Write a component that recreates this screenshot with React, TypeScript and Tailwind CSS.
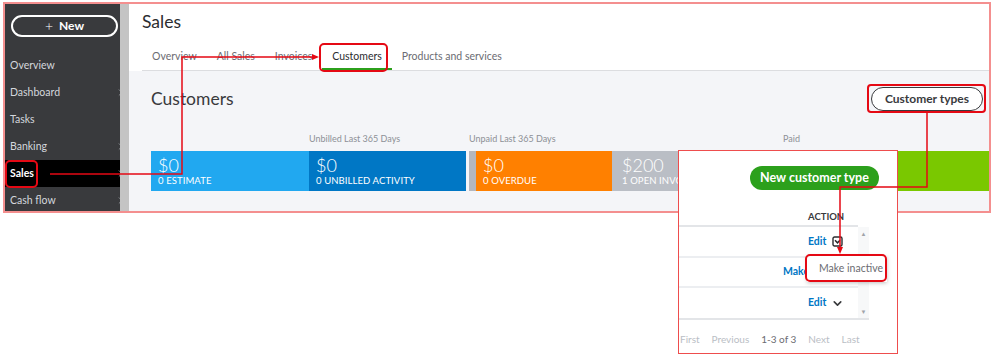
import React from "react";
import { ChevronRight, ChevronDown } from "lucide-react";

const nav = [
  { label: "Overview", chevron: false },
  { label: "Dashboard", chevron: true },
  { label: "Tasks", chevron: false },
  { label: "Banking", chevron: true },
  { label: "Sales", chevron: true, active: true },
  { label: "Cash flow", chevron: true },
];

const tabs = ["Overview", "All Sales", "Invoices", "Customers", "Products and services"];

function Segment({ amount, label, className }: { amount: string; label: string; className: string }) {
  return (
    <div className={`h-full flex flex-col justify-center overflow-hidden whitespace-nowrap text-white ${className}`}>
      <span className="text-[18px] leading-[20px] font-light">{amount}</span>
      <span className="text-[9.5px] leading-[12px] tracking-[0.01em]">{label}</span>
    </div>
  );
}

function FocusChevron() {
  return (
    <svg width="11" height="11" viewBox="0 0 11 11" className="text-[#2b2c2f]">
      <rect x="1" y="1" width="9" height="9" rx="1.5" fill="none" stroke="currentColor" strokeWidth="1.4" />
      <path d="M3 4.3 L5.5 6.8 L8 4.3" fill="none" stroke="currentColor" strokeWidth="1.6" />
    </svg>
  );
}

export default function App() {
  return (
    <div className="relative w-[999px] h-[359px] bg-white overflow-hidden font-['Lato','Noto_Sans',sans-serif] text-[#393a3d]">
      {/* first screenshot */}
      <div className="pl-[3px] pt-[2px]">
        <div className="w-[988px] h-[211px] border-2 border-[#f48f8f] flex overflow-hidden">
          {/* sidebar */}
          <div className="w-[115px] h-full bg-[#393a3d] overflow-hidden flex flex-col">
            <div className="ml-[6px] mt-[11px] w-[107px] h-[24px] rounded-full border-2 border-white flex items-center justify-center gap-[6px] text-white">
              <span className="text-[14px] leading-none font-light">+</span>
              <span className="text-[12px] font-bold">New</span>
            </div>
            <div className="mt-[15px] flex flex-col">
              {nav.map((n) => (
                <div
                  key={n.label}
                  className={`h-[27px] pl-[5px] flex items-center justify-between text-[10.5px] ${
                    n.active ? "bg-black text-white font-bold" : "text-[#d4d7dc]"
                  }`}
                >
                  <span>{n.label}</span>
                  {n.chevron && <ChevronRight size={11} strokeWidth={2} className="-mr-[6px] text-[#8d9096]" />}
                </div>
              ))}
            </div>
          </div>
          <div className="w-[9px] h-full bg-[#c4c4c4]" />
          {/* main */}
          <div className="flex-1 h-full flex flex-col bg-[#f4f5f8]">
            <div className="h-[67px] bg-white pl-[13px] pt-[8px]">
              <div className="text-[17.5px] leading-[20px] text-[#2b2c2f]">Sales</div>
              <div className="mt-[11px] h-[28px] flex border-b border-[#dcdde0] text-[10.5px] text-[#6b6c72]">
                {tabs.map((t) => (
                  <div
                    key={t}
                    className={`px-[10px] flex items-center ${
                      t === "Customers" ? "text-[#2b2c2f] border-b-2 border-[#2ca01c] pt-[2px]" : ""
                    }`}
                  >
                    {t}
                  </div>
                ))}
              </div>
            </div>
            <div className="pl-[22px] pt-[16px]">
              <div className="flex items-center justify-between pr-[6px]">
                <span className="text-[17.5px] leading-[22px] text-[#393a3d]">Customers</span>
                <div className="w-[112px] h-[24px] rounded-full border-[1.5px] border-[#393a3d] bg-white flex items-center justify-center text-[12px] font-bold text-[#393a3d]">
                  Customer types
                </div>
              </div>
              <div className="mt-[22px] h-[12px] flex text-[9px] leading-[12px] text-[#8d9096] whitespace-nowrap">
                <div className="w-[158px]" />
                <div className="w-[160px]">Unbilled Last 365 Days</div>
                <div className="w-[314px]">Unpaid Last 365 Days</div>
                <div>Paid</div>
              </div>
              <div className="mt-[6px] h-[40px] flex">
                <Segment amount="$0" label="0 ESTIMATE" className="w-[158px] bg-[#21a8f0] pl-[7px]" />
                <Segment amount="$0" label="0 UNBILLED ACTIVITY" className="w-[157px] bg-[#0077c5] pl-[7px]" />
                <div className="w-[3px]" />
                <div className="w-[7px] h-full bg-[#b4b7be]" />
                <Segment amount="$0" label="0 OVERDUE" className="w-[136px] bg-[#ff8000] pl-[7px]" />
                <Segment amount="$200" label="1 OPEN INVOICE" className="w-[168px] bg-[#babec5] pl-[10px]" />
                <div className="w-[3px]" />
                <div className="flex-1 h-full bg-[#7ac800]" />
              </div>
            </div>
          </div>
        </div>
      </div>

      {/* second screenshot: customer types popup */}
      <div className="absolute left-[678px] top-[150px] w-[220px] h-[204px] bg-white border border-[#ee4d4d] flex flex-col">
        <div className="ml-[71px] mt-[15px] w-[129px] h-[24px] rounded-full bg-[#2ca01c] flex items-center justify-center text-white text-[12.5px] font-bold">
          New customer type
        </div>
        <div className="mt-[18px] flex">
          <div className="w-[179px] flex flex-col">
            <div className="h-[19px] pl-[129px] flex items-end pb-[2px] border-b-2 border-[#e3e5e8] text-[9.5px] font-bold text-[#393a3d] leading-[12px]">
              ACTION
            </div>
            <div className="h-[31px] pl-[129px] flex items-center gap-[6px] border-b-2 border-[#eceef1] text-[10.5px] font-bold text-[#0077c5]">
              <span>Edit</span>
              <FocusChevron />
            </div>
            <div className="h-[30px] pl-[104px] flex items-center border-b-2 border-[#eceef1] text-[10.5px] font-bold text-[#0077c5]">
              <span>Make</span>
            </div>
            <div className="h-[30px] pl-[129px] flex items-center gap-[5px] text-[10.5px] font-bold text-[#0077c5]">
              <span>Edit</span>
              <ChevronDown size={13} strokeWidth={3} className="text-[#393a3d]" />
            </div>
          </div>
          <div className="w-[11px] mt-[19px] h-[91px] bg-[#f7f8f9] flex flex-col items-center justify-between text-[6px] text-[#a0a3a9] py-[2px]">
            <span>▲</span>
            <span>▼</span>
          </div>
        </div>
        <div className="w-[190px] border-t-2 border-[#e3e5e8]" />
        <div className="mt-[12px] pl-[1px] flex gap-[12px] text-[10px] text-[#babec5]">
          <span>First</span>
          <span>Previous</span>
          <span className="text-[#6b6c72]">1-3 of 3</span>
          <span>Next</span>
          <span>Last</span>
        </div>
        {/* dropdown menu */}
        <div className="absolute left-[128px] top-[105px] w-[80px] h-[26px] bg-white shadow-[0_1px_4px_rgba(0,0,0,0.25)] flex items-center pl-[12px] text-[10.5px] text-[#6b6c72]">
          Make inactive
        </div>
      </div>

      {/* highlight boxes */}
      <div className="absolute left-[5px] top-[160px] w-[33px] h-[28px] rounded-[5px] border-[2.5px] border-[#e50914]" />
      <div className="absolute left-[319px] top-[43px] w-[69px] h-[29px] rounded-[5px] border-[2.5px] border-[#e50914]" />
      <div className="absolute left-[867px] top-[84px] w-[119px] h-[29px] rounded-[4px] border-[2.5px] border-[#e50914]" />
      <div className="absolute left-[805px] top-[254px] w-[82px] h-[28px] rounded-[5px] border-[2.5px] border-[#e50914]" />

      {/* arrows */}
      <svg className="absolute left-0 top-0 pointer-events-none" width="999" height="359" viewBox="0 0 999 359">
        <path d="M50 174 H182 V57 H313" fill="none" stroke="#e50914" strokeWidth="1.5" />
        <path d="M319 57 L312 54 L312 60 Z" fill="#e50914" />
        <path d="M927 113 V187 H840 V248" fill="none" stroke="#e50914" strokeWidth="1.5" />
        <path d="M840 254 L837 247 L843 247 Z" fill="#e50914" />
      </svg>
    </div>
  );
}
